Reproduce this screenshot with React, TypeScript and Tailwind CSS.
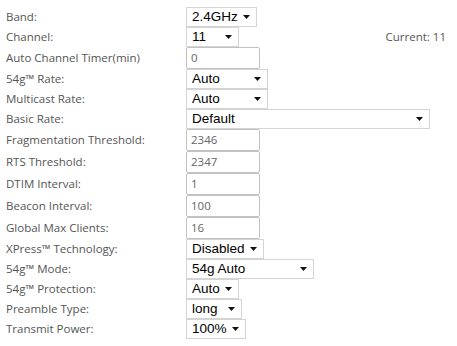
type Row =
  | { label: string; kind: 'select'; value: string; width: number }
  | { label: string; kind: 'input'; value: string }

const rows: Row[] = [
  { label: 'Band:', kind: 'select', value: '2.4GHz', width: 71 },
  { label: 'Channel:', kind: 'select', value: '11', width: 53 },
  { label: 'Auto Channel Timer(min)', kind: 'input', value: '0' },
  { label: '54g™ Rate:', kind: 'select', value: 'Auto', width: 82 },
  { label: 'Multicast Rate:', kind: 'select', value: 'Auto', width: 82 },
  { label: 'Basic Rate:', kind: 'select', value: 'Default', width: 244 },
  { label: 'Fragmentation Threshold:', kind: 'input', value: '2346' },
  { label: 'RTS Threshold:', kind: 'input', value: '2347' },
  { label: 'DTIM Interval:', kind: 'input', value: '1' },
  { label: 'Beacon Interval:', kind: 'input', value: '100' },
  { label: 'Global Max Clients:', kind: 'input', value: '16' },
  { label: 'XPress™ Technology:', kind: 'select', value: 'Disabled', width: 78 },
  { label: '54g™ Mode:', kind: 'select', value: '54g Auto', width: 128 },
  { label: '54g™ Protection:', kind: 'select', value: 'Auto', width: 53 },
  { label: 'Preamble Type:', kind: 'select', value: 'long', width: 56 },
  { label: 'Transmit Power:', kind: 'select', value: '100%', width: 60 },
]

const FakeSelect = ({ value, width }: { value: string; width: number }) => (
  <div
    className="h-[20px] flex items-center justify-between border border-[#d4d4d4] bg-white pl-[5px] pr-[6px] text-[13.5px] text-black font-['Liberation_Sans',Arial,sans-serif]"
    style={{ width }}
  >
    <span>{value}</span>
    <svg width="7" height="4" viewBox="0 0 7 4">
      <polygon points="0,0 7,0 3.5,4" fill="#111" />
    </svg>
  </div>
)

const FakeInput = ({ value }: { value: string }) => (
  <div className="h-[22px] w-[74px] flex items-center border border-[#c2c2c2] rounded-[2px] bg-white pl-[4px] text-[11.5px] text-[#666] font-['Open_Sans',Tahoma,sans-serif]">
    {value}
  </div>
)

export default function App() {
  return (
    <div className="w-[457px] h-[346px] bg-white pt-[7px] font-['Open_Sans',Tahoma,sans-serif]">
      {rows.map((row, i) => (
        <div key={i} className="flex items-center">
          <div className="w-[186px] pl-[6px] text-[11.5px] text-[#555]">
            {row.label}
          </div>
          {row.kind === 'select' ? (
            <FakeSelect value={row.value} width={row.width} />
          ) : (
            <FakeInput value={row.value} />
          )}
          {i === 1 && (
            <div className="ml-auto pr-[11px] text-[11.5px] text-[#555]">
              Current: 11
            </div>
          )}
        </div>
      ))}
    </div>
  )
}
